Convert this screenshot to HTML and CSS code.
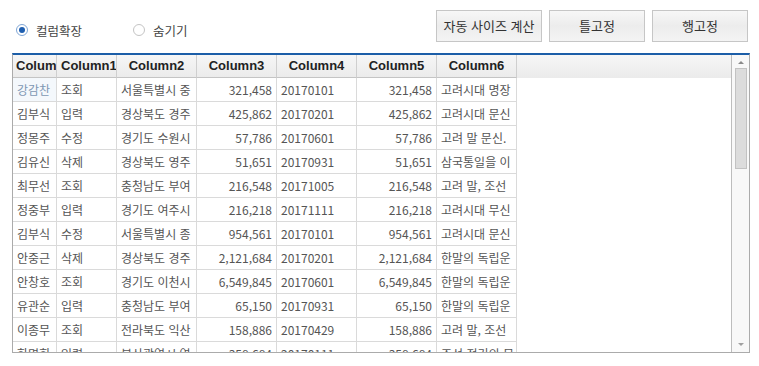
FILE: index.html
```html
<!DOCTYPE html>
<html lang="ko">
<head>
    <meta charset="UTF-8">
    <title>Grid</title>
    <link rel="stylesheet" href="styles.css">
</head>
<body>
    <div class="toolbar">
        <div class="options">
            <label class="radio checked"><span class="dot"></span>컬럼확장</label>
            <label class="radio"><span class="dot"></span>숨기기</label>
        </div>
        <div class="buttons">
            <button class="btn">자동 사이즈 계산</button>
            <button class="btn">틀고정</button>
            <button class="btn">행고정</button>
        </div>
    </div>

    <div class="grid">
        <div class="grid-body">
            <div class="rows">
                <div class="row head">
                    <div class="cell">Column</div>
                    <div class="cell">Column1</div>
                    <div class="cell">Column2</div>
                    <div class="cell">Column3</div>
                    <div class="cell">Column4</div>
                    <div class="cell">Column5</div>
                    <div class="cell">Column6</div>
                </div>
                <div class="row">
                    <div class="cell sel">강감찬</div><div class="cell">조회</div><div class="cell">서울특별시 중</div>
                    <div class="cell num">321,458</div><div class="cell">20170101</div><div class="cell num">321,458</div><div class="cell">고려시대 명장</div>
                </div>
                <div class="row">
                    <div class="cell">김부식</div><div class="cell">입력</div><div class="cell">경상북도 경주</div>
                    <div class="cell num">425,862</div><div class="cell">20170201</div><div class="cell num">425,862</div><div class="cell">고려시대 문신</div>
                </div>
                <div class="row">
                    <div class="cell">정몽주</div><div class="cell">수정</div><div class="cell">경기도 수원시</div>
                    <div class="cell num">57,786</div><div class="cell">20170601</div><div class="cell num">57,786</div><div class="cell">고려 말 문신.</div>
                </div>
                <div class="row">
                    <div class="cell">김유신</div><div class="cell">삭제</div><div class="cell">경상북도 영주</div>
                    <div class="cell num">51,651</div><div class="cell">20170931</div><div class="cell num">51,651</div><div class="cell">삼국통일을 이</div>
                </div>
                <div class="row">
                    <div class="cell">최무선</div><div class="cell">조회</div><div class="cell">충청남도 부여</div>
                    <div class="cell num">216,548</div><div class="cell">20171005</div><div class="cell num">216,548</div><div class="cell">고려 말, 조선</div>
                </div>
                <div class="row">
                    <div class="cell">정중부</div><div class="cell">입력</div><div class="cell">경기도 여주시</div>
                    <div class="cell num">216,218</div><div class="cell">20171111</div><div class="cell num">216,218</div><div class="cell">고려시대 무신</div>
                </div>
                <div class="row">
                    <div class="cell">김부식</div><div class="cell">수정</div><div class="cell">서울특별시 종</div>
                    <div class="cell num">954,561</div><div class="cell">20170101</div><div class="cell num">954,561</div><div class="cell">고려시대 문신</div>
                </div>
                <div class="row">
                    <div class="cell">안중근</div><div class="cell">삭제</div><div class="cell">경상북도 경주</div>
                    <div class="cell num">2,121,684</div><div class="cell">20170201</div><div class="cell num">2,121,684</div><div class="cell">한말의 독립운</div>
                </div>
                <div class="row">
                    <div class="cell">안창호</div><div class="cell">조회</div><div class="cell">경기도 이천시</div>
                    <div class="cell num">6,549,845</div><div class="cell">20170601</div><div class="cell num">6,549,845</div><div class="cell">한말의 독립운</div>
                </div>
                <div class="row">
                    <div class="cell">유관순</div><div class="cell">입력</div><div class="cell">충청남도 부여</div>
                    <div class="cell num">65,150</div><div class="cell">20170931</div><div class="cell num">65,150</div><div class="cell">한말의 독립운</div>
                </div>
                <div class="row">
                    <div class="cell">이종무</div><div class="cell">조회</div><div class="cell">전라북도 익산</div>
                    <div class="cell num">158,886</div><div class="cell">20170429</div><div class="cell num">158,886</div><div class="cell">고려 말, 조선</div>
                </div>
                <div class="row">
                    <div class="cell">한명회</div><div class="cell">입력</div><div class="cell">부산광역시 연</div>
                    <div class="cell num">358,684</div><div class="cell">20170111</div><div class="cell num">358,684</div><div class="cell">조선 전기의 문</div>
                </div>
            </div>
            <div class="scrollbar">
                <div class="arrow up"></div>
                <div class="thumb"></div>
                <div class="track"></div>
                <div class="arrow down"></div>
            </div>
        </div>
    </div>
</body>
</html>
```

FILE: styles.css
```css
body {
    margin: 0;
    background: #fff;
    font-family: "Noto Sans CJK KR", "Liberation Sans", sans-serif;
    font-size: 12px;
    color: #444;
}

.toolbar {
    display: flex;
    align-items: center;
    height: 53px;
    padding: 0 11px 0 16px;
    box-sizing: border-box;
}

.options {
    display: flex;
    align-items: center;
    padding-top: 7px;
}

.radio {
    display: flex;
    align-items: center;
    gap: 8px;
    font-size: 12.5px;
    color: #444;
    margin-right: 51px;
}

.radio .dot {
    width: 12px;
    height: 12px;
    border: 1px solid #c4c4c4;
    border-radius: 50%;
    box-sizing: border-box;
    background: #fff;
    position: relative;
}

.radio.checked .dot {
    border-color: #7fa6d6;
}

.radio.checked .dot::after {
    content: "";
    position: absolute;
    left: 2px;
    top: 2px;
    width: 6px;
    height: 6px;
    border-radius: 50%;
    background: #1f5fb0;
}

.buttons {
    display: flex;
    gap: 7px;
    margin-left: auto;
    padding-bottom: 2px;
}

.btn {
    width: 96px;
    height: 32px;
    padding: 0;
    border: 1px solid #c6c6c6;
    background: linear-gradient(#f7f7f7, #ececec 50%, #f4f4f4);
    font-family: "Noto Sans CJK KR", sans-serif;
    font-size: 13px;
    color: #333;
}

.btn:first-child {
    width: 106px;
}

.grid {
    margin: 0 9px 0 12px;
    height: 300px;
    border: 1px solid #ababab;
    border-top: 2px solid #1c5ea8;
    box-sizing: border-box;
    overflow: hidden;
}

.grid-body {
    display: flex;
    height: 100%;
}

.rows {
    flex: 1;
    overflow: hidden;
}

.row {
    display: grid;
    grid-template-columns: 44px 60px 80px 80px 80px 80px 80px;
    height: 24px;
}

.cell {
    box-sizing: border-box;
    border-right: 1px solid #dadada;
    border-bottom: 1px solid #dadada;
    padding: 0 4px;
    white-space: nowrap;
    overflow: hidden;
    line-height: 23px;
    color: #555;
}

.cell.num {
    text-align: right;
}

.cell.sel {
    background: #f4f8fc;
    color: #7d97b3;
}

.row.head {
    height: 23px;
    background: linear-gradient(#f6f6f6, #ebebeb);
}

.row.head .cell {
    border-right-color: #cfcfcf;
    border-bottom-color: #c4c4c4;
    line-height: 22px;
    text-align: center;
    font-family: "Liberation Sans", sans-serif;
    font-weight: bold;
    font-size: 13px;
    color: #222;
}

.row.head .cell:first-child {
    text-align: left;
    padding: 0 3px;
}

.scrollbar {
    width: 17px;
    border-left: 1px solid #bdbdbd;
    background: #f8f8f8;
    display: flex;
    flex-direction: column;
    align-items: center;
}

.arrow {
    width: 0;
    height: 0;
    border-left: 3px solid transparent;
    border-right: 3px solid transparent;
    margin: 6px 0 4px;
}

.arrow.up {
    border-bottom: 3px solid #8a8a8a;
}

.arrow.down {
    border-top: 3px solid #a0a0a0;
    margin: 4px 0 6px;
}

.thumb {
    width: 12px;
    height: 101px;
    background: #dcdcdc;
    border: 1px solid #c2c2c2;
    box-sizing: border-box;
}

.track {
    flex: 1;
}
```
